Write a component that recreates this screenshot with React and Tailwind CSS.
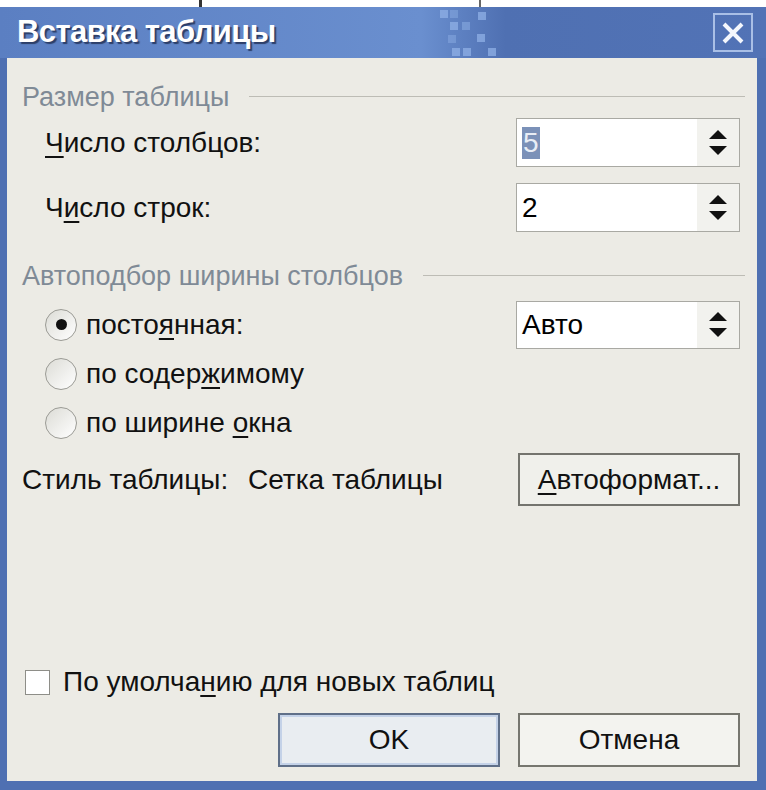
const font = { fontFamily: '"Liberation Sans", Arial, sans-serif' };

const U = ({ children }) => (
  <span className="underline decoration-2 underline-offset-4">{children}</span>
);

const SpinArrows = () => (
  <div className="w-[42px] h-full flex flex-col items-center justify-center gap-[7px] bg-[#f2f2ee]">
    <svg width="18" height="9" viewBox="0 0 18 9">
      <polygon points="9,0 18,9 0,9" fill="#111" />
    </svg>
    <svg width="18" height="9" viewBox="0 0 18 9">
      <polygon points="0,0 18,0 9,9" fill="#111" />
    </svg>
  </div>
);

const SpinBox = ({ children }) => (
  <div className="w-[224px] h-full flex border border-[#a9a9a3] bg-white">
    <div className="flex-1 flex items-center pl-[5px] text-[28px] text-black">{children}</div>
    <SpinArrows />
  </div>
);

const GroupHeader = ({ title }) => (
  <div className="h-[28px] flex items-center pl-[15px] pr-[12px] gap-[20px]">
    <span className="text-[27px] text-[#7f8a96] leading-none">{title}</span>
    <div className="flex-1 h-px bg-[#bdbcb5] mt-[-2px]"></div>
  </div>
);

const Radio = ({ checked, children }) => (
  <div className="h-[49px] flex items-center pl-[38px]">
    <div className="w-[32px] h-[32px] rounded-full border-[1.5px] border-[#9b9b95] bg-gradient-to-br from-[#dcdcd6] to-white flex items-center justify-center">
      {checked && <div className="w-[11px] h-[11px] rounded-full bg-[#111]"></div>}
    </div>
    <span className="ml-[9px] text-[28px] text-[#111]">{children}</span>
  </div>
);

const App = () => {
  return (
    <div className="w-[766px] h-[790px] bg-white flex flex-col" style={font}>
      {/* top strip */}
      <div className="h-[7px] flex">
        <div className="ml-[199px] w-[3px] h-full bg-[#333]"></div>
        <div className="ml-[277px] w-[2px] h-full bg-[#666]"></div>
      </div>

      {/* window */}
      <div className="flex-1 flex flex-col bg-[#4f70b2]">
        {/* title bar */}
        <div className="relative h-[51px] flex items-center justify-between pl-[17px] pr-[13px] bg-[linear-gradient(90deg,#5b7fc2_0%,#6a8fcf_55%,#4f70b2_66%,#5273b6_100%)]">
          <span className="text-[31px] font-bold text-white tracking-[-0.6px] [text-shadow:2px_2px_1px_#2c3e68]">
            Вставка таблицы
          </span>
          <svg className="absolute left-[440px] top-[3px]" width="64" height="48" viewBox="0 0 64 48">
            <g fill="#8fb0e6" opacity="0.75">
              <rect x="0" y="0" width="8" height="8" />
              <rect x="10" y="0" width="8" height="8" opacity="0.6" />
              <rect x="38" y="2" width="8" height="8" />
              <rect x="10" y="12" width="8" height="8" />
              <rect x="22" y="12" width="8" height="8" opacity="0.7" />
              <rect x="8" y="25" width="8" height="8" opacity="0.6" />
              <rect x="37" y="24" width="8" height="8" />
              <rect x="12" y="38" width="8" height="8" />
              <rect x="23" y="38" width="8" height="8" />
              <rect x="48" y="38" width="8" height="8" />
            </g>
          </svg>
          <div className="w-[40px] h-[39px] border-2 border-[#a9bfe6] flex items-center justify-center">
            <svg width="22" height="22" viewBox="0 0 22 22">
              <path d="M2 2 L20 20 M20 2 L2 20" stroke="#f4f7fd" strokeWidth="4" />
            </svg>
          </div>
        </div>

        {/* body */}
        <div className="flex-1 ml-[7px] mr-[9px] mb-[9px] bg-[#ecebe5] flex flex-col pt-[25px] pb-[14px]">
          <GroupHeader title="Размер таблицы" />

          <div className="mt-[7px] h-[49px] flex items-center justify-between pl-[38px] pr-[17px]">
            <span className="text-[28px] text-[#111]"><U>Ч</U>исло столбцов:</span>
            <SpinBox>
              <span className="bg-[#7b91b8] text-[#e8edf5] leading-[32px] px-[1px]">5</span>
            </SpinBox>
          </div>

          <div className="mt-[16px] h-[49px] flex items-center justify-between pl-[38px] pr-[17px]">
            <span className="text-[28px] text-[#111]">Ч<U>и</U>сло строк:</span>
            <SpinBox>2</SpinBox>
          </div>

          <div className="mt-[30px]">
            <GroupHeader title="Автоподбор ширины столбцов" />
          </div>

          <div className="mt-[10px] flex justify-between items-center pr-[17px]">
            <Radio checked>посто<U>я</U>нная:</Radio>
            <div className="h-[48px]">
              <SpinBox>Авто</SpinBox>
            </div>
          </div>
          <Radio>по содер<U>ж</U>имому</Radio>
          <Radio>по ширине <U>о</U>кна</Radio>

          <div className="mt-[6px] h-[53px] flex items-center pl-[15px] pr-[17px]">
            <span className="text-[28px] text-[#111] w-[226px]">Стиль таблицы:</span>
            <span className="text-[28px] text-[#111] flex-1">Сетка таблицы</span>
            <button className="w-[222px] h-full border-2 border-[#74746e] bg-[#f0f0eb] text-[28px] text-[#111] flex items-center justify-center">
              <U>А</U>втоформат...
            </button>
          </div>

          <div className="flex-1"></div>

          <div className="h-[26px] flex items-center pl-[18px]">
            <div className="w-[25px] h-[25px] border-[1.5px] border-[#8e8e88] bg-white"></div>
            <span className="ml-[13px] text-[28px] text-[#111]">По умолча<U>н</U>ию для новых таблиц</span>
          </div>

          <div className="mt-[18px] h-[54px] flex justify-end gap-[18px] pr-[17px]">
            <button className="w-[222px] h-full border-2 border-[#5f6f88] bg-[#e9edf1] text-[28px] text-[#111] flex items-center justify-center shadow-[inset_0_0_0_2px_#c4d2e8]">
              OK
            </button>
            <button className="w-[222px] h-full border-2 border-[#76766f] bg-[#f3f3ef] text-[28px] text-[#111] flex items-center justify-center">
              Отмена
            </button>
          </div>
        </div>
      </div>
    </div>
  );
};

export default App;
